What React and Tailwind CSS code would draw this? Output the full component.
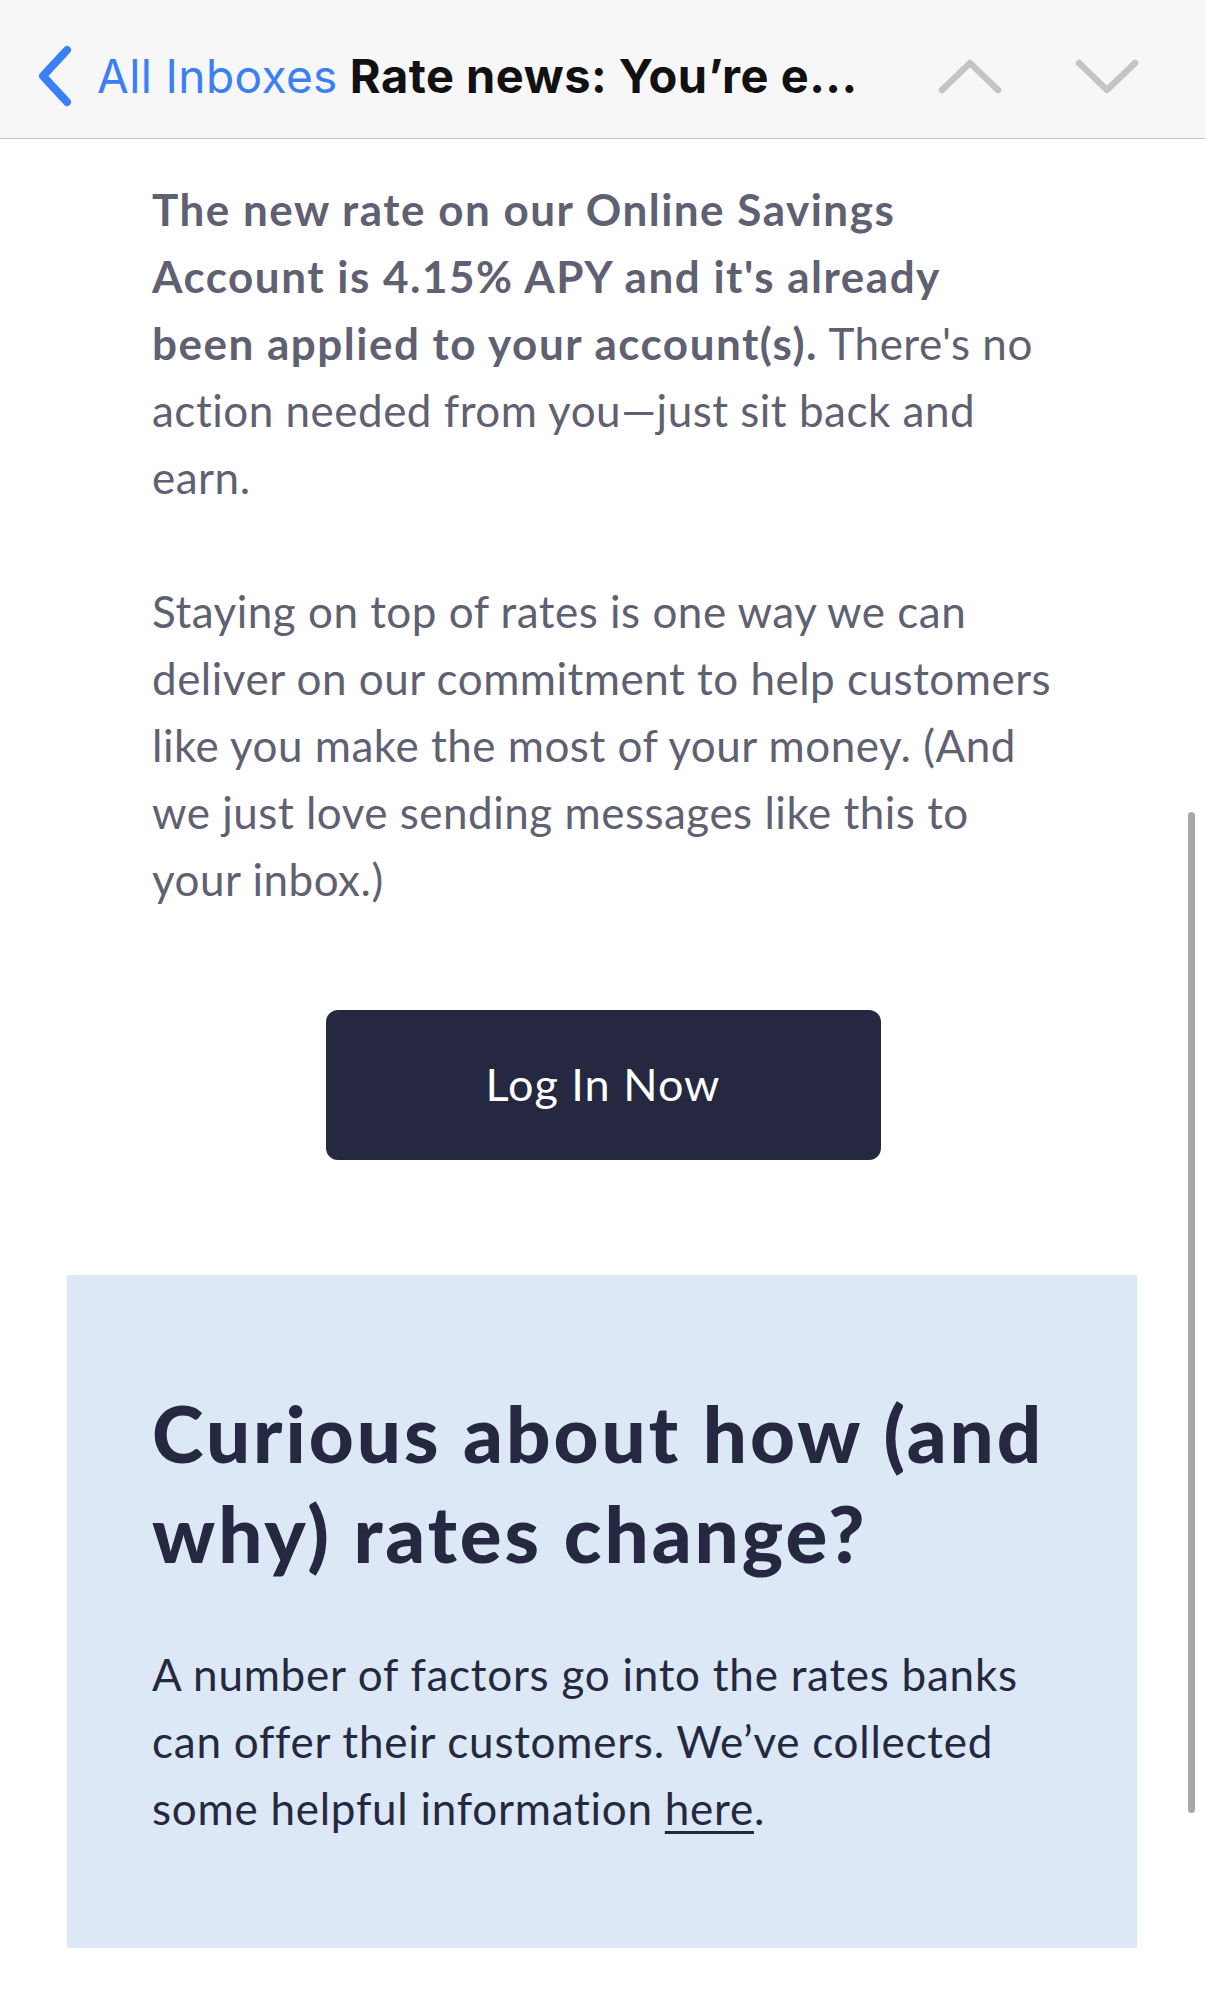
import React from 'react';

const ChevronBack = () => (
  <svg width="40" height="64" viewBox="0 0 40 64" className="shrink-0">
    <polyline points="30,6 6,32 30,58" fill="none" stroke="#3a7ff6" strokeWidth="8" strokeLinecap="round" strokeLinejoin="round" />
  </svg>
);

const ChevronUp = () => (
  <svg width="70" height="40" viewBox="0 0 70 40">
    <polyline points="6,34 34,7 62,34" fill="none" stroke="#c4c4c4" strokeWidth="6.5" strokeLinecap="round" strokeLinejoin="round" />
  </svg>
);

const ChevronDown = () => (
  <svg width="70" height="40" viewBox="0 0 70 40">
    <polyline points="6,7 34,34 62,7" fill="none" stroke="#c4c4c4" strokeWidth="6.5" strokeLinecap="round" strokeLinejoin="round" />
  </svg>
);

const App = () => {
  return (
    <div className="relative w-[1205px] h-[2000px] bg-white overflow-hidden">
      {/* Mail top bar */}
      <header className="h-[139px] bg-[#f7f7f7] border-b border-[#c6c6c6] flex items-center pt-[14px] font-['Inter','Liberation_Sans',sans-serif]">
        <div className="ml-[37px]">
          <ChevronBack />
        </div>
        <span className="ml-[20px] text-[46px] tracking-[0.4px] text-[#3a7ff6]">All Inboxes</span>
        <span className="ml-[12px] text-[47px] font-bold tracking-[0.5px] text-[#111111]">Rate news: You’re e...</span>
        <div className="ml-auto mr-[62px] flex items-center gap-[67px]">
          <ChevronUp />
          <ChevronDown />
        </div>
      </header>

      {/* Email body */}
      <main className="font-['Lato','Open_Sans',sans-serif]">
        <div className="pl-[152px] pt-[37px] text-[44px] leading-[67px] tracking-[0.5px] text-[#5f6172]">
          <p>
            <b className="font-bold tracking-[1.5px]">
              The new rate on our Online Savings<br />
              Account is 4.15% APY and it's already<br />
              been applied to your account(s).
            </b>{' '}
            There's no<br />
            action needed from you—just sit back and<br />
            earn.
          </p>
          <p className="mt-[67px]">
            Staying on top of rates is one way we can<br />
            deliver on our commitment to help customers<br />
            like you make the most of your money. (And<br />
            we just love sending messages like this to<br />
            your inbox.)
          </p>
        </div>

        <div className="flex justify-center mt-[97px] pl-[1px]">
          <button className="w-[555px] h-[150px] rounded-[12px] bg-[#252840] text-white text-[45px] tracking-[1px]">
            Log In Now
          </button>
        </div>

        <section className="mt-[115px] ml-[67px] w-[1070px] bg-[#dce8f5] pl-[85px] pt-[108px] pb-[106px] text-[#252840]">
          <h2 className="text-[78px] leading-[100px] font-black tracking-[3px]">
            Curious about how (and<br />
            why) rates change?
          </h2>
          <p className="mt-[58px] text-[44px] leading-[67px] tracking-[0.75px]">
            A number of factors go into the rates banks<br />
            can offer their customers. We’ve collected<br />
            some helpful information <a className="underline underline-offset-[6px] decoration-[3px]">here</a>.
          </p>
        </section>
      </main>

      {/* scroll indicator */}
      <div className="absolute left-[1188px] top-[812px] w-[7px] h-[1001px] rounded-full bg-[#a7a7a7]" />
    </div>
  );
};

export default App;
